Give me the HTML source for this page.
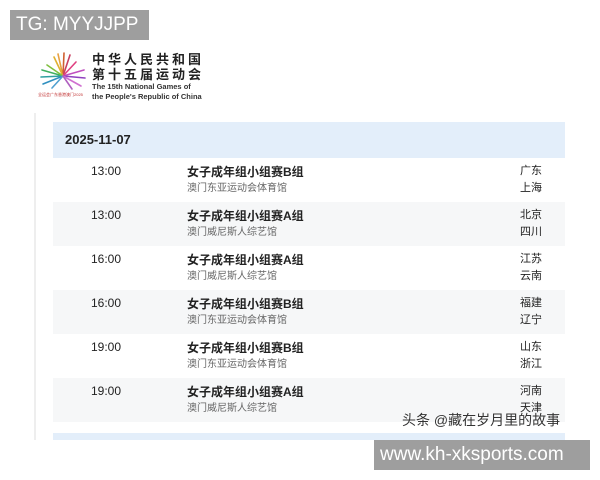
<!DOCTYPE html>
<html><head><meta charset="utf-8"><style>
*{margin:0;padding:0;box-sizing:border-box}
body{width:600px;height:480px;background:#fff;position:relative;overflow:hidden;font-family:"Liberation Sans","Noto Sans CJK SC",sans-serif;color:#222}
.abs{position:absolute}
.tg{left:10px;top:10px;width:139px;height:30px;background:#9e9e9e;color:#fff;font-size:19px;line-height:30px;padding-left:6px}
.www{left:374px;top:440px;width:216px;height:30px;background:#9e9e9e;color:#fff;font-size:19px;line-height:30px;padding-left:6px}
.lline{left:34px;top:113px;width:2px;height:327px;background:#eee}
.hdr{left:53px;top:122px;width:512px;height:36px;background:#e3eefa;font-weight:bold;font-size:13px;line-height:36px;padding-left:12px;color:#222}
.row{left:53px;width:512px;height:44px}
.gray{background:#f6f7f8}
.t{position:absolute;left:38px;top:6px;font-size:12px;color:#222}
.n{position:absolute;left:134px;top:5px;font-size:12px;font-weight:bold;color:#222}
.v{position:absolute;left:134px;top:21px;font-size:10px;color:#666}
.c{position:absolute;left:467px;top:5px;font-size:11px;line-height:17px;color:#222}
.bot{left:53px;top:433px;width:512px;height:7px;background:#e3eefa}
.wm{left:402px;top:410px;font-size:14px;color:#333;text-shadow:0 0 2px #fff}
.t1{left:92px;top:52px;font-size:13px;font-weight:bold;letter-spacing:3px;line-height:15px;color:#222}
.t2{left:92px;top:82px;font-size:7.5px;font-weight:bold;line-height:10px;color:#333}
</style></head><body>
<div class="abs tg">TG: MYYJJPP</div>
<svg class="abs" style="left:38px;top:50px" width="50" height="48" viewBox="0 0 50 48">
<g stroke-width="1.6" stroke-linecap="round">
<line x1="25" y1="26" x2="20" y2="4" stroke="#e8a040"/><line x1="25" y1="26" x2="26" y2="3" stroke="#d06030"/><line x1="25" y1="26" x2="32" y2="5" stroke="#c84060"/><line x1="25" y1="26" x2="16" y2="7" stroke="#e0b030"/>
<line x1="25" y1="26" x2="4" y2="20" stroke="#40b060"/><line x1="25" y1="26" x2="3" y2="27" stroke="#30a0a0"/><line x1="25" y1="26" x2="5" y2="34" stroke="#3090c0"/><line x1="25" y1="26" x2="9" y2="15" stroke="#80c040"/>
<line x1="25" y1="26" x2="46" y2="20" stroke="#c050c0"/><line x1="25" y1="26" x2="47" y2="28" stroke="#9040c0"/><line x1="25" y1="26" x2="43" y2="36" stroke="#d070d0"/><line x1="25" y1="26" x2="38" y2="12" stroke="#e04080"/>
<line x1="25" y1="26" x2="14" y2="38" stroke="#50a0d0"/><line x1="25" y1="26" x2="34" y2="39" stroke="#b060c0"/>
</g><text x="0" y="46" font-size="4" fill="#c03030" font-family="Liberation Sans">全运会广东香港澳门2025</text></svg>
<div class="abs t1">中华人民共和国<br>第十五届运动会</div>
<div class="abs t2">The 15th National Games of<br>the People's Republic of China</div>
<div class="abs lline"></div>
<div class="abs hdr">2025-11-07</div>
<div class="abs row" style="top:158px"><span class="t">13:00</span><span class="n">女子成年组小组赛B组</span><span class="v">澳门东亚运动会体育馆</span><span class="c">广东<br>上海</span></div>
<div class="abs row gray" style="top:202px"><span class="t">13:00</span><span class="n">女子成年组小组赛A组</span><span class="v">澳门威尼斯人综艺馆</span><span class="c">北京<br>四川</span></div>
<div class="abs row" style="top:246px"><span class="t">16:00</span><span class="n">女子成年组小组赛A组</span><span class="v">澳门威尼斯人综艺馆</span><span class="c">江苏<br>云南</span></div>
<div class="abs row gray" style="top:290px"><span class="t">16:00</span><span class="n">女子成年组小组赛B组</span><span class="v">澳门东亚运动会体育馆</span><span class="c">福建<br>辽宁</span></div>
<div class="abs row" style="top:334px"><span class="t">19:00</span><span class="n">女子成年组小组赛B组</span><span class="v">澳门东亚运动会体育馆</span><span class="c">山东<br>浙江</span></div>
<div class="abs row gray" style="top:378px"><span class="t">19:00</span><span class="n">女子成年组小组赛A组</span><span class="v">澳门威尼斯人综艺馆</span><span class="c">河南<br>天津</span></div>
<div class="abs bot"></div>
<div class="abs wm">头条 @藏在岁月里的故事</div>
<div class="abs www">www.kh-xksports.com</div>
</body></html>
